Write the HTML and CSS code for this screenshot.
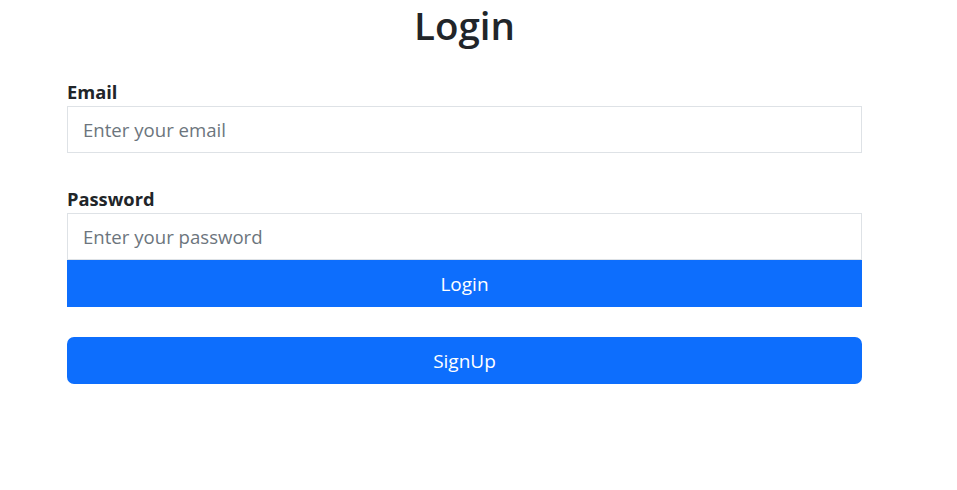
FILE: index.html
```html
<!DOCTYPE html>
<html lang="en">
<head>
<meta charset="utf-8">
<title>Login</title>
<link rel="stylesheet" href="styles.css">
</head>
<body>
<div class="page">
  <h1 class="title">Login</h1>
  <form class="form">
    <div class="field">
      <label class="label" for="email">Email</label>
      <input class="input" id="email" type="email" placeholder="Enter your email">
    </div>
    <div class="field">
      <label class="label" for="password">Password</label>
      <input class="input" id="password" type="password" placeholder="Enter your password">
      <button class="btn btn-square" type="button">Login</button>
    </div>
    <button class="btn btn-round" type="button">SignUp</button>
  </form>
</div>
</body>
</html>
```

FILE: styles.css
```css
* { box-sizing: border-box; }
html, body { margin: 0; padding: 0; background: #fff; }
body {
  font-family: "Segoe UI", "Open Sans", "Noto Sans", sans-serif;
  color: #212529;
}
.page {
  width: 795px;
  margin-left: 67px;
}
.title {
  margin: 0;
  padding-top: 2px;
  font-size: 38.5px;
  line-height: 46px;
  font-weight: 600;
  text-align: center;
}
.form {
  display: flex;
  flex-direction: column;
  margin-top: 31px;
}
.field {
  display: flex;
  flex-direction: column;
  margin-bottom: 33px;
}
.field:nth-child(2) { margin-bottom: 30px; }
.label {
  font-size: 18.3px;
  font-weight: 700;
  line-height: 24px;
  margin-bottom: 3px;
  padding-top: 1px;
  height: 24px;
}
.input {
  height: 47px;
  padding: 0 15px;
  font-family: inherit;
  font-size: 18.6px;
  color: #212529;
  border: 1px solid #dee2e6;
  border-radius: 0;
  outline: none;
  background: #fff;
}
.input::placeholder { color: #6c757d; }
.btn {
  height: 47px;
  border: none;
  background: #0d6efd;
  color: #fff;
  font-family: inherit;
  font-size: 19px;
  padding: 0;
  cursor: pointer;
}
.btn-square { border-radius: 0; }
.btn-round { border-radius: 7px; }
```
